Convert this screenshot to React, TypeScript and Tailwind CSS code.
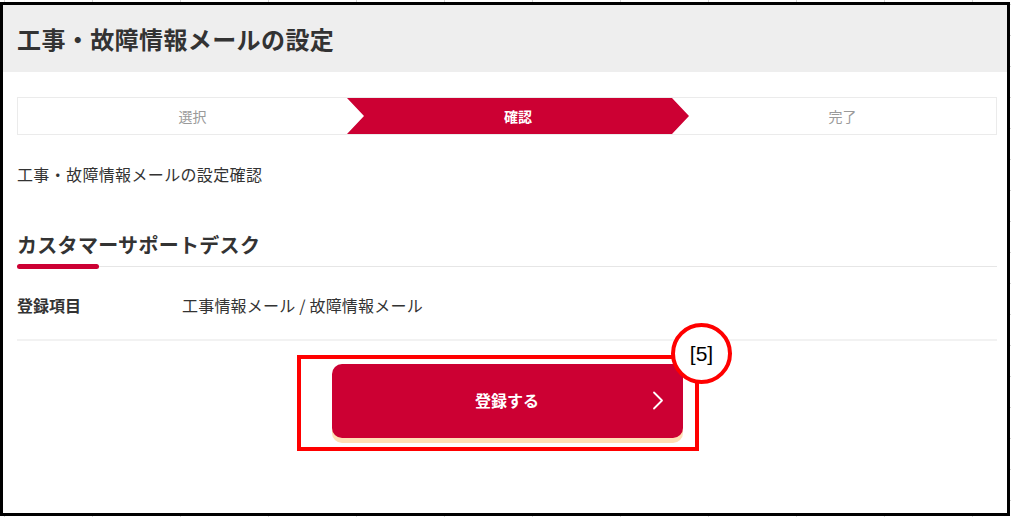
import React from "react";

export default function App() {
  return (
    <div className="relative w-[1011px] h-[517px] overflow-hidden bg-white bg-[linear-gradient(90deg,#d6d6d6_1px,transparent_1px),linear-gradient(#d6d6d6_1px,transparent_1px)] bg-[length:88px_31px] bg-[position:4px_4px] font-['Noto_Sans_CJK_JP','Noto_Sans',sans-serif] text-[#333333]">
      <div className="mt-[2px] w-[1010px] h-[514px] border-[3px] border-black bg-white flex flex-col">
        {/* Header */}
        <div className="h-[67px] shrink-0 bg-[#eeeeee] flex items-center pl-[14px]">
          <h1 className="text-[24px] font-bold leading-none tracking-[0.4px] text-[#333333]">
            工事・故障情報メールの設定
          </h1>
        </div>

        <div className="pl-[14px] pr-[10px] flex flex-col">
          {/* Stepper */}
          <div className="mt-[25px] h-[38px] border border-[#ebebeb] flex">
            <div className="w-[329px] h-full flex items-center justify-center pl-[20px] text-[14px] text-[#9a9a9a]">
              選択
            </div>
            <div className="w-[342px] h-full bg-[#cc0033] flex items-center justify-center text-[14px] font-bold text-white [clip-path:polygon(0_0,calc(100%_-_17px)_0,100%_50%,calc(100%_-_17px)_100%,0_100%,17px_50%)]">
              確認
            </div>
            <div className="flex-1 h-full flex items-center justify-center text-[14px] text-[#9a9a9a]">
              完了
            </div>
          </div>

          {/* Sub text */}
          <p className="mt-[27px] text-[16px] leading-[24px] tracking-[0.35px]">工事・故障情報メールの設定確認</p>

          {/* Section heading */}
          <h2 className="mt-[45px] text-[20px] font-bold leading-[28px] tracking-[0.3px]">
            カスタマーサポートデスク
          </h2>
          <div className="mt-[5px] h-[5px] bg-[linear-gradient(#e6e6e6,#e6e6e6)] bg-no-repeat bg-[length:100%_1px] bg-[position:0_2px]">
            <div className="w-[82px] h-[5px] rounded-full bg-[#cc0033]" />
          </div>

          {/* Row */}
          <div className="flex pt-[24px] pb-[22px] border-b-2 border-[#f2f2f2] text-[16px] leading-[24px]">
            <div className="w-[165px] font-bold">登録項目</div>
            <div className="tracking-[0.2px]">工事情報メール / 故障情報メール</div>
          </div>

          {/* Button */}
          <button className="mt-[23px] mx-auto w-[351px] h-[74px] rounded-[10px] bg-[#cc0033] shadow-[0_5px_0_#ffe0b5] grid grid-cols-[1fr_auto_1fr] items-center text-white">
            <span />
            <span className="text-[16px] font-bold leading-none pb-[3px]">登録する</span>
            <span className="justify-self-end pr-[19px] flex items-center pb-[2px]">
              <svg width="12" height="19" viewBox="0 0 12 19" fill="none">
                <path d="M2 1.5 L10 9.5 L2 17.5" stroke="white" strokeWidth="1.8" strokeLinecap="round" strokeLinejoin="round" />
              </svg>
            </span>
          </button>
        </div>
      </div>

      {/* Annotation overlay */}
      <div className="absolute left-[297px] top-[355px] w-[402px] h-[96px] border-4 border-[#ff0000]" />
      <div className="absolute left-[671px] top-[323px] w-[61px] h-[61px] rounded-full border-4 border-[#ff0000] bg-white flex items-center justify-center">
        <span className="font-['Liberation_Sans',Arial,sans-serif] text-[21px] leading-none text-black">[5]</span>
      </div>
    </div>
  );
}
